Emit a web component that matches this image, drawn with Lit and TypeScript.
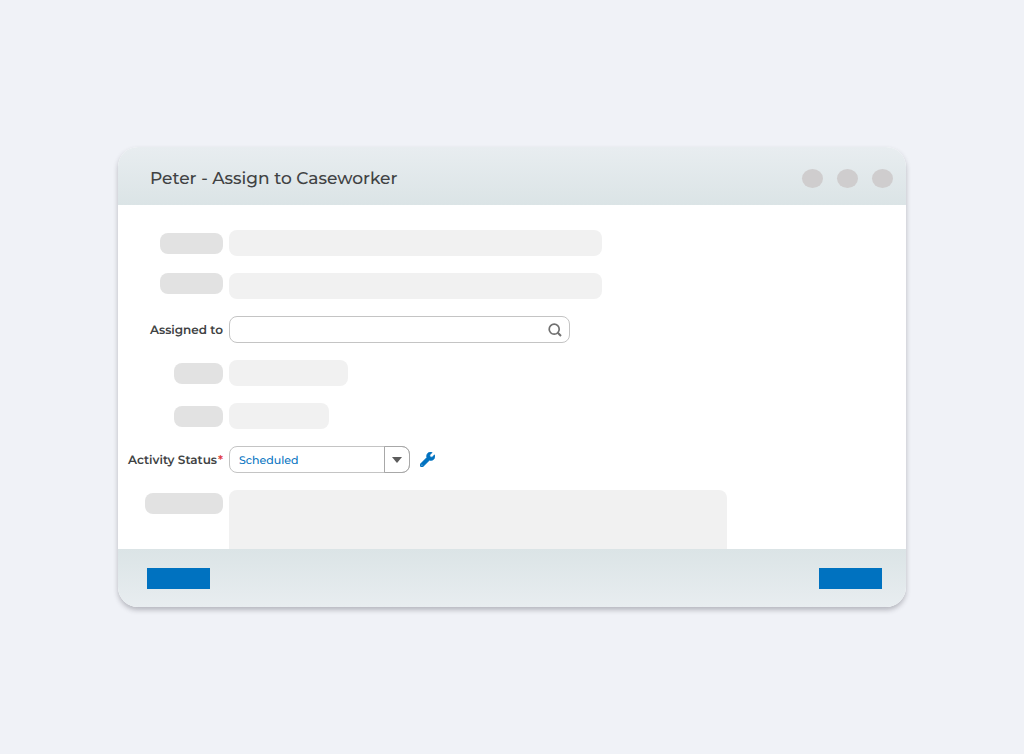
import { LitElement, html, css } from "lit";
import { customElement, state } from "lit/decorators.js";

@customElement("app-root")
export class AppRoot extends LitElement {
  static styles = css`
    :host {
      display: flex;
      align-items: center;
      justify-content: center;
      box-sizing: border-box;
      min-height: 100vh;
      padding: 24px;
      background: #f0f2f7;
      color: #404243;
      font-family: Montserrat, Inter, "Open Sans", sans-serif;
      text-rendering: geometricPrecision;
    }
    * {
      box-sizing: border-box;
    }
    .dialog {
      width: 100%;
      max-width: 788px;
      border-radius: 20px;
      overflow: hidden;
      background: #fff;
      box-shadow: 0 3px 5px rgba(60, 60, 70, 0.32);
    }
    .header {
      display: flex;
      align-items: center;
      justify-content: space-between;
      padding: 18px 13px 14px 32px;
      background: linear-gradient(#e8edf0, #dbe4e6);
    }
    .title {
      margin: 0;
      padding-top: 2px;
      font-size: 17px;
      line-height: 24px;
      font-weight: 500;
    }
    .controls {
      display: flex;
      gap: 14px;
    }
    .dot {
      width: 21px;
      height: 19px;
      padding: 0;
      border: 0;
      border-radius: 50%;
      background: #cfcdce;
    }
    .body {
      display: grid;
      grid-template-columns: 96px minmax(0, 1fr);
      gap: 17px 6px;
      padding: 25px 24px 0 9px;
    }
    .label {
      justify-self: end;
      align-self: center;
      padding-top: 2px;
      font-size: 12px;
      line-height: 18px;
      font-weight: 600;
      white-space: nowrap;
    }
    .required {
      padding-left: 1px;
      color: #e0393e;
    }
    .pill {
      justify-self: end;
      height: 21px;
      margin-top: 3px;
      border-radius: 8px;
      background: #e2e2e2;
    }
    .pill.top {
      margin-top: 0;
    }
    .w-sm {
      width: 49px;
    }
    .w-md {
      width: 63px;
    }
    .w-lg {
      width: 78px;
    }
    .block {
      width: 100%;
      height: 26px;
      border-radius: 8px;
      background: #f1f1f1;
    }
    .long {
      max-width: 373px;
    }
    .medium {
      max-width: 119px;
    }
    .short {
      max-width: 100px;
    }
    .area {
      max-width: 498px;
      height: 59px;
      border-radius: 8px 8px 0 0;
    }
    .search {
      display: flex;
      align-items: center;
      width: 100%;
      max-width: 341px;
      height: 27px;
      padding-right: 7px;
      border: 1px solid #c4c4c4;
      border-radius: 8px;
    }
    .search-input {
      flex: 1;
      min-width: 0;
      height: 100%;
      padding: 0 8px;
      border: 0;
      outline: 0;
      background: none;
      font: inherit;
      font-size: 12px;
    }
    .icon-button {
      display: flex;
      padding: 0;
      border: 0;
      background: none;
    }
    .status {
      display: flex;
      align-items: center;
      gap: 10px;
    }
    .select-box {
      display: grid;
      grid-template-columns: minmax(0, 1fr) 26px;
      width: 181px;
      height: 27px;
    }
    .select {
      grid-area: 1 / 1 / 2 / 3;
      appearance: none;
      width: 100%;
      margin: 0;
      padding: 1px 34px 0 9px;
      border: 1px solid #c4c4c4;
      border-radius: 8px;
      background: #fff;
      color: #0573bf;
      font-family: inherit;
      text-rendering: inherit;
      font-size: 11px;
      font-weight: 500;
    }
    .arrow {
      grid-area: 1 / 2 / 2 / 3;
      display: flex;
      align-items: center;
      justify-content: center;
      border: 1px solid #a8a8a8;
      border-radius: 0 8px 8px 0;
      pointer-events: none;
    }
    .footer {
      display: flex;
      justify-content: space-between;
      padding: 19px 24px 18px 29px;
      background: linear-gradient(#dbe4e6, #e8edf0);
    }
    .action {
      width: 63px;
      height: 21px;
      padding: 0;
      border: 0;
      background: #0072c0;
    }
  `;

  @state() private assignee = "";

  render() {
    return html`
      <main class="dialog">
        <header class="header">
          <h1 class="title">Peter - Assign to Caseworker</h1>
          <div class="controls">
            <button class="dot" aria-label="Minimize"></button>
            <button class="dot" aria-label="Maximize"></button>
            <button class="dot" aria-label="Close"></button>
          </div>
        </header>
        <div class="body">
          <div class="pill w-md"></div>
          <div class="block long"></div>
          <div class="pill top w-md"></div>
          <div class="block long"></div>

          <label class="label" for="assignee">Assigned to</label>
          <div class="search">
            <input
              id="assignee"
              class="search-input"
              type="text"
              .value=${this.assignee}
              @input=${(e: Event) => (this.assignee = (e.target as HTMLInputElement).value)}
            />
            <button class="icon-button" aria-label="Search">
              <svg width="14" height="14" viewBox="0 0 14 14" fill="none" stroke="#707070" stroke-width="1.7">
                <circle cx="6.2" cy="6.2" r="5" />
                <path d="M9.8 9.8L13 13" stroke-width="2" />
              </svg>
            </button>
          </div>

          <div class="pill w-sm"></div>
          <div class="block medium"></div>
          <div class="pill w-sm"></div>
          <div class="block short"></div>

          <label class="label" for="status">Activity Status<span class="required">*</span></label>
          <div class="status">
            <div class="select-box">
              <select id="status" class="select">
                <option>Scheduled</option>
              </select>
              <span class="arrow">
                <svg width="10" height="6" viewBox="0 0 10 6"><path d="M0 0h10L5 6z" fill="#5c5c5c" /></svg>
              </span>
            </div>
            <button class="icon-button" aria-label="Configure status">
              <svg width="15" height="15" viewBox="0 0 512 512" fill="#0072c0" stroke="#0072c0" stroke-width="22">
                <path
                  d="M507.7 109.1c-2.2-9-13.5-12.1-20.1-5.5l-74.4 74.4-67.9-11.3L334 98.9l74.4-74.4c6.6-6.6 3.4-17.9-5.7-20.2-47.4-11.7-99.6.9-136.6 37.9-39.6 39.6-50.5 97.1-34.1 147.2L18.7 402.8c-25 25-25 65.5 0 90.5s65.5 25 90.5 0l213.2-213.2c50.1 16.7 107.5 5.7 147.4-34.2 37.1-37.1 49.7-89.3 37.9-136.8zM64 472c-13.2 0-24-10.8-24-24s10.7-24 24-24 24 10.7 24 24-10.7 24-24 24z"
                />
              </svg>
            </button>
          </div>

          <div class="pill w-lg"></div>
          <div class="block area"></div>
        </div>
        <footer class="footer">
          <button class="action" aria-label="Cancel"></button>
          <button class="action" aria-label="Save"></button>
        </footer>
      </main>
    `;
  }
}
